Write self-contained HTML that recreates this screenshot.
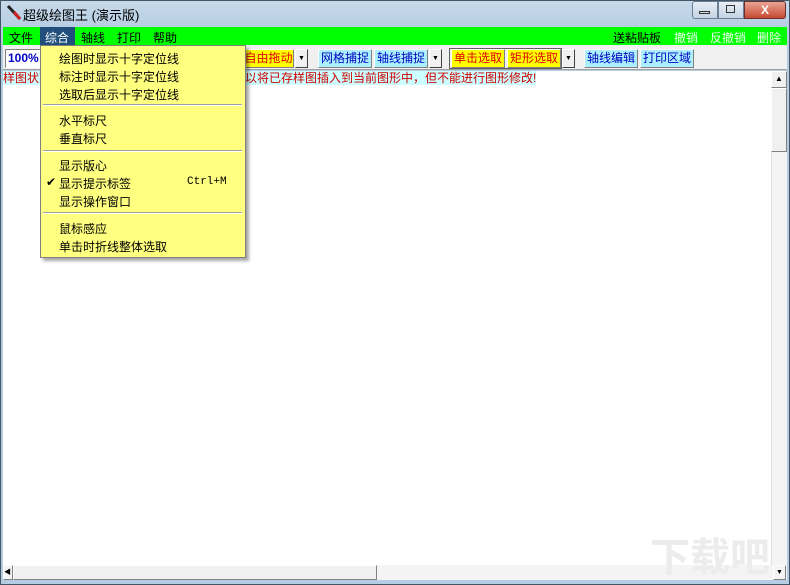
<!DOCTYPE html><html><head><meta charset="utf-8"><style>
*{margin:0;padding:0;box-sizing:border-box}
body{width:790px;height:585px;overflow:hidden;background:#fff;font-family:"Liberation Sans","Noto Sans CJK SC","WenQuanYi Zen Hei",sans-serif;font-size:12px;position:relative}
.a{position:absolute;white-space:nowrap}
.btn{position:absolute;top:49px;height:19px;line-height:17px;font-size:12px;text-align:center;border:1px solid;border-color:#fff #808080 #808080 #fff}
.dd{position:absolute;top:49px;height:19px;width:13px;background:#f0f0f0;border:1px solid;border-color:#fff #404040 #404040 #fff;font-size:7px;text-align:center;line-height:17px}
.mi{position:absolute;left:59px;font-size:12px}
.sep{position:absolute;left:43px;width:199px;height:2px;border-top:1px solid #a0a0a0;border-bottom:1px solid #fff}
</style></head><body>
<div class="a" style="left:0;top:0;width:790px;height:585px;background:linear-gradient(#c6d9ea,#b5cde2 30px,#b5cde2);border:1px solid #456"></div>
<div class="a" style="left:6px;top:4px;width:16px;height:18px"><svg width="18" height="18"><line x1="2" y1="2" x2="14" y2="15" stroke="#222" stroke-width="3"/><line x1="8" y1="8" x2="14" y2="15" stroke="#c22" stroke-width="3"/></svg></div>
<div class="a" style="left:23px;top:5px;font-size:13px;color:#000">超级绘图王 (演示版)</div>
<div class="a" style="left:692px;top:1px;width:26px;height:18px;border:1px solid #6a7f95;border-radius:3px 0 0 3px;background:linear-gradient(#e7eef6,#c3d3e3)"></div>
<div class="a" style="left:718px;top:1px;width:26px;height:18px;border:1px solid #6a7f95;background:linear-gradient(#e7eef6,#c3d3e3)"></div>
<div class="a" style="left:744px;top:1px;width:42px;height:18px;border:1px solid #6a3030;border-radius:0 3px 3px 0;background:linear-gradient(#e9a493,#c74a33);color:#fff;text-align:center;font-weight:bold;line-height:16px">X</div>
<div class="a" style="left:699px;top:11px;width:11px;height:3px;border:1px solid #333"></div>
<div class="a" style="left:726px;top:5px;width:9px;height:8px;border:1px solid #333"></div>
<div class="a" style="left:3px;top:27px;width:784px;height:18px;background:#00ff00"></div>
<div class="a" style="left:40px;top:27px;width:35px;height:18px;background:#1f4f7a"></div>
<div class="a" style="left:9px;top:29px;font-size:12px">文件</div>
<div class="a" style="left:45px;top:29px;font-size:12px;color:#fff">综合</div>
<div class="a" style="left:81px;top:29px;font-size:12px">轴线</div>
<div class="a" style="left:117px;top:29px;font-size:12px">打印</div>
<div class="a" style="left:153px;top:29px;font-size:12px">帮助</div>
<div class="a" style="left:613px;top:29px;font-size:12px">送粘贴板</div>
<div class="a" style="left:674px;top:29px;font-size:12px;color:#e8ffe8">撤销</div>
<div class="a" style="left:710px;top:29px;font-size:12px;color:#e8ffe8">反撤销</div>
<div class="a" style="left:757px;top:29px;font-size:12px;color:#e8ffe8">删除</div>
<div class="a" style="left:3px;top:45px;width:784px;height:25px;background:#f0f0f0;border-bottom:1px solid #a0a0a0"></div>
<div class="a" style="left:5px;top:49px;width:36px;height:19px;background:#fff;border:1px solid;border-color:#808080 #fff #fff #808080;color:#00c;font-weight:bold;font-size:12px;line-height:17px;padding-left:2px">100%</div>
<div class="btn" style="left:243px;width:51px;background:#ffff00;color:#e00000">自由拖动</div><div class="dd" style="left:295px">▼</div>
<div class="btn" style="left:318px;width:54px;background:#aaf0ff;color:#0000c0">网格捕捉</div>
<div class="btn" style="left:374px;width:54px;background:#aaf0ff;color:#0000c0">轴线捕捉</div><div class="dd" style="left:429px">▼</div>
<div class="a" style="left:449px;top:48px;width:113px;height:21px;border:1px solid #606060"></div>
<div class="btn" style="left:451px;width:54px;background:#ffff00;color:#e00000">单击选取</div>
<div class="btn" style="left:507px;width:54px;background:#ffff00;color:#e00000">矩形选取</div><div class="dd" style="left:562px">▼</div>
<div class="btn" style="left:584px;width:54px;background:#aaf0ff;color:#0000c0">轴线编辑</div>
<div class="btn" style="left:640px;width:54px;background:#aaf0ff;color:#0000c0">打印区域</div>
<div class="a" style="left:3px;top:71px;width:768px;height:494px;background:#fff"></div>
<div class="a" style="left:3px;top:71px;width:532px;height:14px;background:#ccffff"></div>
<div class="a" style="left:3px;top:71px;font-size:12px;color:#d00000;line-height:14px">样图状态：可以将已存样图插入到当前图形中，但不能进行图形修改!</div>
<div class="a" style="left:245px;top:71px;font-size:12px;color:#d00000;line-height:14px;background:#ccffff">以将已存样图插入到当前图形中，但不能进行图形修改!</div>
<div class="a" style="left:771px;top:71px;width:16px;height:494px;background:#f4f4f4;border-left:1px solid #e0e0e0"></div>
<div class="a" style="left:771px;top:71px;width:16px;height:17px;background:#f0f0f0;border:1px solid;border-color:#fff #808080 #808080 #fff;font-size:8px;text-align:center;line-height:14px">▲</div>
<div class="a" style="left:771px;top:88px;width:16px;height:64px;background:#f0f0f0;border:1px solid;border-color:#fff #808080 #808080 #fff"></div>
<div class="a" style="left:3px;top:565px;width:784px;height:15px;background:#f4f4f4"></div>
<div class="a" style="left:3px;top:565px;width:10px;height:15px;border:1px solid;border-color:#fff #808080 #808080 #fff;font-size:7px;line-height:13px">◀</div>
<div class="a" style="left:13px;top:565px;width:364px;height:15px;background:#f0f0f0;border:1px solid;border-color:#fff #808080 #808080 #fff"></div>
<div class="a" style="left:773px;top:565px;width:13px;height:15px;border:1px solid;border-color:#fff #808080 #808080 #fff;font-size:7px;line-height:13px;text-align:center">▼</div>
<div class="a" style="left:650px;top:525px;font-size:40px;color:#ececec;font-weight:bold">下载吧</div>
<div class="a" style="left:40px;top:45px;width:206px;height:213px;background:#ffff80;border:1px solid #808080;box-shadow:3px 3px 3px rgba(0,0,0,.35)"></div>
<div class="mi" style="top:50px">绘图时显示十字定位线</div>
<div class="mi" style="top:68px">标注时显示十字定位线</div>
<div class="mi" style="top:86px">选取后显示十字定位线</div>
<div class="sep" style="top:104px"></div>
<div class="mi" style="top:112px">水平标尺</div>
<div class="mi" style="top:130px">垂直标尺</div>
<div class="sep" style="top:150px"></div>
<div class="mi" style="top:157px">显示版心</div>
<div class="a" style="left:46px;top:175px;font-size:12px">✔</div>
<div class="mi" style="top:175px">显示提示标签</div>
<div class="a" style="left:187px;top:176px;font-family:'Liberation Mono',monospace;font-size:11px">Ctrl+M</div>
<div class="mi" style="top:193px">显示操作窗口</div>
<div class="sep" style="top:212px"></div>
<div class="mi" style="top:220px">鼠标感应</div>
<div class="mi" style="top:238px">单击时折线整体选取</div>
</body></html>
